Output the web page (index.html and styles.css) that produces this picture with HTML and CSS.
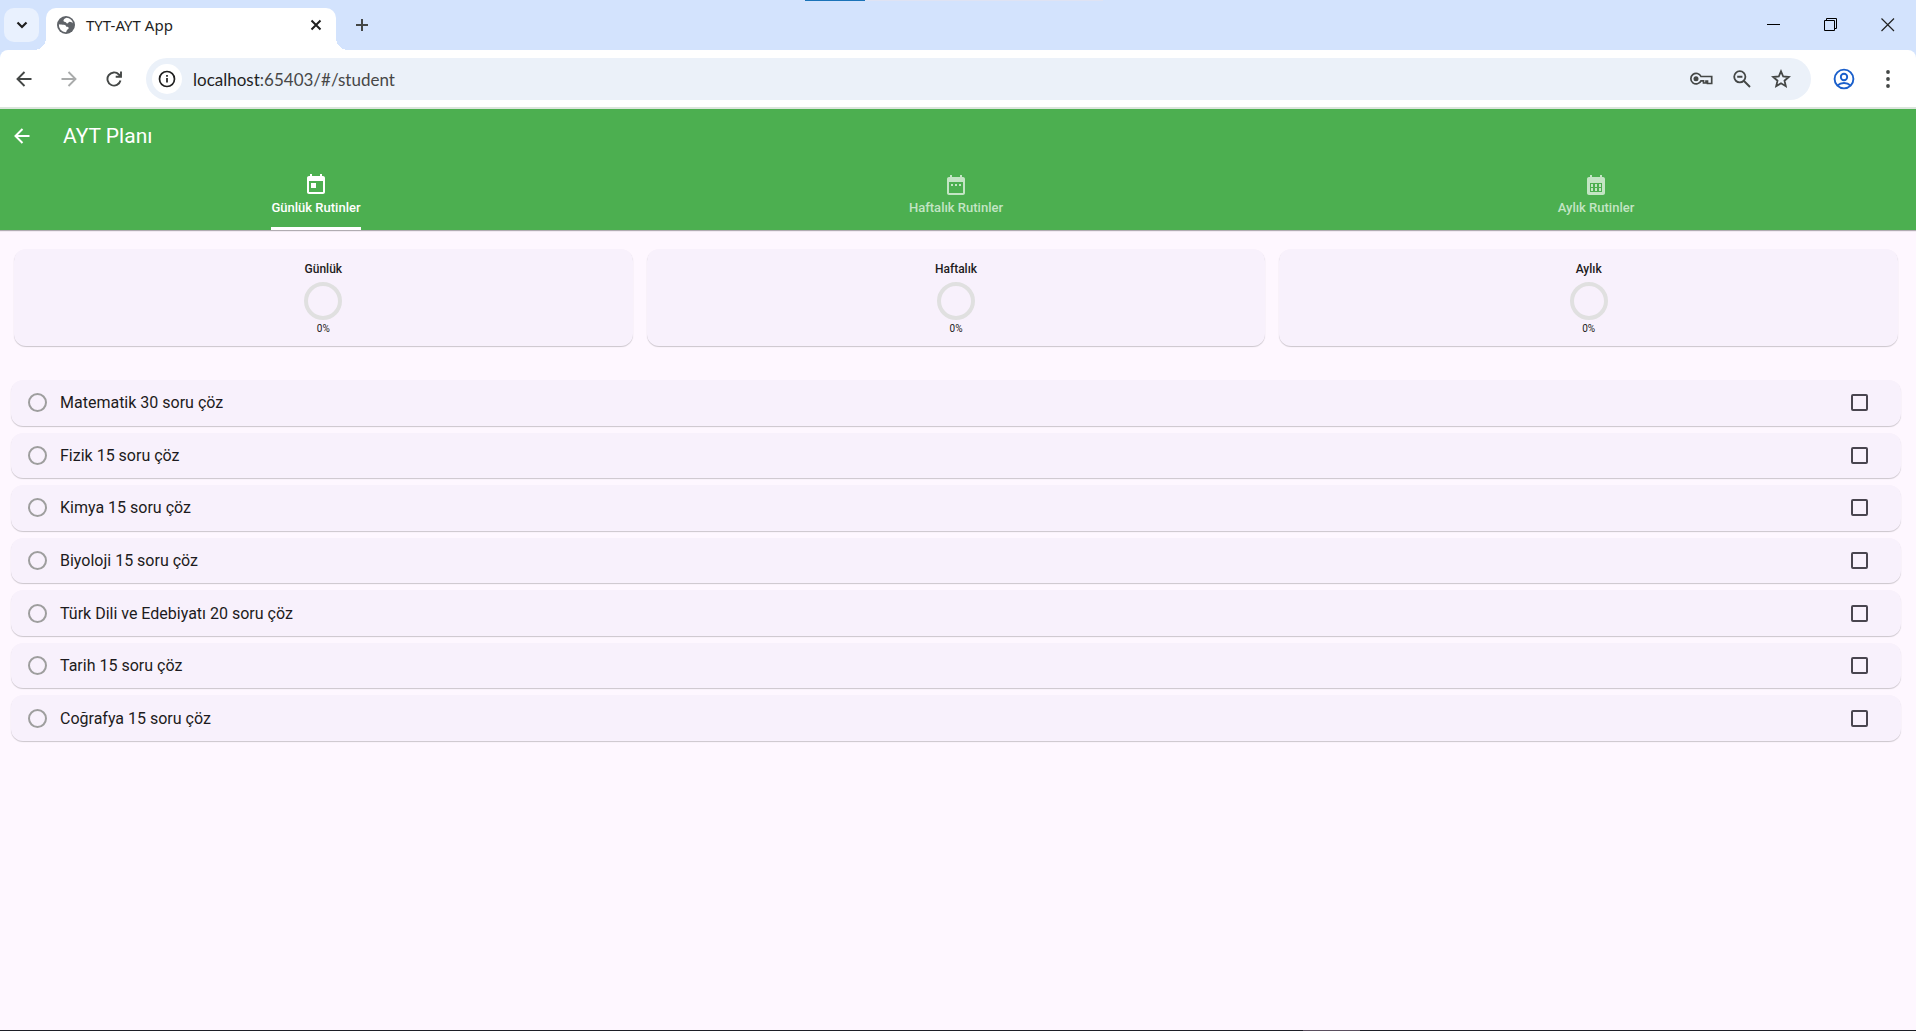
FILE: index.html
```html
<!DOCTYPE html>
<html lang="tr">
<head>
  <meta charset="UTF-8">
  <meta name="viewport" content="width=device-width, initial-scale=1.0">
  <title>TYT-AYT App</title>
  <link rel="stylesheet" href="styles.css">
</head>
<body>
  <div class="top-edge"></div>

  <!-- Browser window -->
  <header class="browser">
    <div class="tab-strip">
      <button class="tab-search" aria-label="Search tabs">
        <svg width="12" height="8" viewBox="0 0 12 8"><path d="M1.5 1.5 6 6l4.500-4.500" fill="none" stroke="#1f1f1f" stroke-width="2.200"/></svg>
      </button>
      <div class="browser-tab">
        <svg width="18" height="18" viewBox="0 0 18 18">
          <circle cx="9" cy="9" r="9" fill="#5f6368"/>
          <path d="M9.500 1.800c-1.500.6-2.700 1.300-3 2.400-.2 1 .6 1.600 1.700 1.700 1.200 0 1 1.400 2 1.500 1.300.1 1.200-1.500 2.600-1.600 1.200 0 2.600.7 3.200 1.700A7.200 7.200 0 0 0 9.500 1.800z" fill="#fff"/>
          <path d="M1.900 8.200c1.300.5 3.300.3 5 .5 1.600.2 2.300 1 2.300 2.100 1.500 0 2.500.2 2.500 1.300 0 1.200-1.500 1.300-2 2.300-.3.700-.2 1.400-1 1.800A7.200 7.200 0 0 1 1.900 8.200z" fill="#fff"/>
        </svg>
        <span class="browser-tab-title">TYT-AYT App</span>
        <button class="tab-close" aria-label="Close tab">
          <svg width="12" height="12" viewBox="0 0 12 12"><path d="M1.500 1.500l9 9M10.500 1.500l-9 9" stroke="#1f1f1f" stroke-width="2"/></svg>
        </button>
      </div>
      <button class="new-tab" aria-label="New tab">
        <svg width="14" height="14" viewBox="0 0 14 14"><path d="M7 1v12M1 7h12" stroke="#444746" stroke-width="2"/></svg>
      </button>
      <div class="window-buttons">
        <button aria-label="Minimize"><svg width="14" height="14" viewBox="0 0 14 14"><path d="M0 6.500h13" stroke="#000"/></svg></button>
        <button aria-label="Restore"><svg width="14" height="14" viewBox="0 0 14 14"><path d="M.5 2.500h10v10H.5zM2.500 2.500v-2h10v10h-2" fill="none" stroke="#000"/></svg></button>
        <button aria-label="Close"><svg width="14" height="14" viewBox="0 0 14 14"><path d="M.5.5l12.500 12.500M13 .5.5 13" stroke="#222" stroke-width="1.200"/></svg></button>
      </div>
    </div>

    <div class="toolbar">
      <nav class="nav-buttons">
        <button aria-label="Back"><svg width="16" height="16" viewBox="0 0 16 16"><path d="M15.500 8H2M8.500 1 1.500 8l7 7" fill="none" stroke="#444746" stroke-width="1.900"/></svg></button>
        <button aria-label="Forward"><svg width="16" height="16" viewBox="0 0 16 16"><path d="M.5 8H14M7.500 1l7 7-7 7" fill="none" stroke="#a9abab" stroke-width="1.900"/></svg></button>
        <button aria-label="Reload"><svg width="16" height="16" viewBox="0 0 16 16"><path d="M14.500 9.600A6.600 6.600 0 1 1 12.900 3.500L15 5.500M15 .5v5.300H9.700" fill="none" stroke="#444746" stroke-width="1.900"/></svg></button>
      </nav>
      <div class="omnibox">
        <button class="site-info" aria-label="Site information">
          <svg width="18" height="18" viewBox="0 0 18 18"><circle cx="9" cy="9" r="7.500" fill="none" stroke="#1f1f1f" stroke-width="1.700"/><path d="M9 8v4.500M9 5v1.700" stroke="#1f1f1f" stroke-width="1.700"/></svg>
        </button>
        <a class="url" href="#/student">localhost<span>:65403/#/student</span></a>
        <div class="omnibox-icons">
          <button aria-label="Passwords">
            <svg width="24" height="16" viewBox="0 0 24 16"><path d="M12 5.500h10.700v7h-4.200V10h-1.500v2H14.500V9.800H12a5.300 5.300 0 1 1 0-4.300z" fill="none" stroke="#444746" stroke-width="1.700"/><circle cx="7" cy="7.700" r="2.500" fill="#444746"/></svg>
          </button>
          <button aria-label="Zoom">
            <svg width="18" height="18" viewBox="0 0 18 18"><circle cx="6.800" cy="6.800" r="5.600" fill="none" stroke="#444746" stroke-width="1.800"/><path d="M11 11l6 6M4.200 6.800h5.200" stroke="#444746" stroke-width="1.900"/></svg>
          </button>
          <button aria-label="Bookmark">
            <svg width="20" height="20" viewBox="0 0 20 20"><path d="M10 2.300l2.200 5.200 5.600.5-4.300 3.700 1.300 5.500-4.800-2.900-4.800 2.900 1.300-5.500L2.200 8l5.600-.5z" fill="none" stroke="#444746" stroke-width="1.800"/></svg>
          </button>
        </div>
      </div>
      <div class="menu-buttons">
        <button aria-label="Profile">
          <svg width="22" height="22" viewBox="0 0 22 22"><g fill="none" stroke="#1a5fcb" stroke-width="1.900"><circle cx="11" cy="11" r="9.400"/><circle cx="11" cy="9" r="3.200"/><path d="M4.500 17.500c3.500-3.400 9.500-3.400 13 0"/></g></svg>
        </button>
        <button aria-label="Menu">
          <svg width="4" height="18" viewBox="0 0 4 18" fill="#444746"><circle cx="2" cy="2" r="1.900"/><circle cx="2" cy="9" r="1.900"/><circle cx="2" cy="16" r="1.900"/></svg>
        </button>
      </div>
    </div>
  </header>

  <!-- App -->
  <div class="app-bar">
    <div class="app-bar-row">
      <button class="app-back" aria-label="Geri">
        <svg width="16" height="16" viewBox="0 0 16 16"><path d="M15.500 8H2M8.500 1 1.500 8l7 7" fill="none" stroke="#fff" stroke-width="2"/></svg>
      </button>
      <h1>AYT Planı</h1>
    </div>
    <div class="tabs" role="tablist">
      <button class="tab active" role="tab" aria-selected="true">
        <svg width="24" height="24" viewBox="0 0 24 24" fill="currentColor"><path d="M19 3h-1V1h-2v2H8V1H6v2H5c-1.110 0-1.990.9-1.990 2L3 19c0 1.100.89 2 2 2h14c1.100 0 2-.9 2-2V5c0-1.100-.9-2-2-2zm0 16H5V8h14v11zM7 10h5v5H7z"/></svg>
        <span>Günlük Rutinler</span>
      </button>
      <button class="tab" role="tab" aria-selected="false">
        <svg width="24" height="24" viewBox="0 0 24 24" fill="currentColor"><path d="M9 11H7v2h2v-2zm4 0h-2v2h2v-2zm4 0h-2v2h2v-2zm2-7h-1V2h-2v2H8V2H6v2H5c-1.110 0-1.990.9-1.990 2L3 20c0 1.100.89 2 2 2h14c1.100 0 2-.9 2-2V6c0-1.100-.9-2-2-2zm0 16H5V9h14v11z"/></svg>
        <span>Haftalık Rutinler</span>
      </button>
      <button class="tab" role="tab" aria-selected="false">
        <svg width="24" height="24" viewBox="0 0 24 24" fill="currentColor"><path fill-rule="evenodd" d="M19 4h-1V2h-2v2H8V2H6v2H5c-1.110 0-1.990.9-1.990 2L3 20c0 1.100.89 2 2 2h14c1.100 0 2-.9 2-2V6c0-1.100-.9-2-2-2zM18 19H6v-9h12zM7 11h2v3H7zM11 11h2v3h-2zM15 11h2v3h-2zM7 15h2v3H7zM11 15h2v3h-2zM15 15h2v3h-2z"/></svg>
        <span>Aylık Rutinler</span>
      </button>
    </div>
  </div>

  <main>
    <section class="progress-cards">
      <div class="progress-card">
        <h2>Günlük</h2>
        <div class="ring"></div>
        <p>0%</p>
      </div>
      <div class="progress-card">
        <h2>Haftalık</h2>
        <div class="ring"></div>
        <p>0%</p>
      </div>
      <div class="progress-card">
        <h2>Aylık</h2>
        <div class="ring"></div>
        <p>0%</p>
      </div>
    </section>

    <ul class="routines">
      <li><label for="r1">Matematik 30 soru çöz</label><input type="checkbox" id="r1"></li>
      <li><label for="r2">Fizik 15 soru çöz</label><input type="checkbox" id="r2"></li>
      <li><label for="r3">Kimya 15 soru çöz</label><input type="checkbox" id="r3"></li>
      <li><label for="r4">Biyoloji 15 soru çöz</label><input type="checkbox" id="r4"></li>
      <li><label for="r5">Türk Dili ve Edebiyatı 20 soru çöz</label><input type="checkbox" id="r5"></li>
      <li><label for="r6">Tarih 15 soru çöz</label><input type="checkbox" id="r6"></li>
      <li><label for="r7">Coğrafya 15 soru çöz</label><input type="checkbox" id="r7"></li>
    </ul>
  </main>

  <footer class="bottom-edge"></footer>
</body>
</html>
```
FILE: styles.css
```css
*,
*::before,
*::after {
  box-sizing: border-box;
}
body {
  margin: 0;
  min-height: 100vh;
  display: flex;
  flex-direction: column;
  background-color: #fef7ff;
  color: #1d1b20;
  font-family: Roboto, sans-serif;
}
button {
  display: flex;
  align-items: center;
  justify-content: center;
  padding: 0;
  border: none;
  background: none;
  font-family: inherit;
  cursor: pointer;
}
svg {
  display: block;
  flex-shrink: 0;
}

/* Browser window */
.top-edge {
  position: absolute;
  top: 0;
  left: 42%;
  width: 298px;
  height: 1px;
  background: linear-gradient(to right, #1a73b8 60px, #dfe3f3 60px);
}
.browser {
  background-color: #d3e3fd;
}
.tab-strip {
  display: flex;
  height: 50px;
  padding: 8px 0 0 4px;
}
.tab-search {
  width: 35px;
  height: 34px;
  border-radius: 10px;
  background-color: #e9f1fe;
}
.browser-tab {
  position: relative;
  display: flex;
  align-items: center;
  width: 290px;
  height: 42px;
  margin-left: 7px;
  padding: 0 14px 8px 11px;
  border-radius: 10px 10px 0 0;
  background-color: #fff;
}
.browser-tab::before,
.browser-tab::after {
  content: "";
  position: absolute;
  bottom: 0;
  width: 12px;
  height: 12px;
}
.browser-tab::before {
  right: 100%;
  background: radial-gradient(circle at 0 0, transparent 12px, #fff 12px);
}
.browser-tab::after {
  left: 100%;
  background: radial-gradient(circle at 100% 0, transparent 12px, #fff 12px);
}
.browser-tab-title {
  flex: 1;
  margin-left: 11px;
  font-family: "Noto Sans", sans-serif;
  font-size: 15px;
  color: #1f1f1f;
}
.new-tab {
  width: 34px;
  height: 34px;
  margin-left: 9px;
}
.window-buttons {
  display: flex;
  margin-left: auto;
}
.window-buttons button {
  width: 57px;
  height: 34px;
}
.toolbar {
  display: flex;
  align-items: center;
  height: 59px;
  padding: 8px 12px 7px 7px;
  border-radius: 8px 8px 0 0;
  border-bottom: 2px solid #dbe5dc;
  background-color: #fff;
}
.nav-buttons {
  display: flex;
  gap: 11px;
}
.nav-buttons button {
  width: 34px;
  height: 34px;
}
.omnibox {
  flex: 1;
  display: flex;
  align-items: center;
  height: 42px;
  margin-left: 15px;
  padding: 0 20px 0 6px;
  border-radius: 21px;
  background-color: #ebf1f9;
}
.site-info {
  width: 30px;
  height: 30px;
  border-radius: 50%;
  background-color: #fff;
}
.url {
  margin-left: 11px;
  font-family: Lato, sans-serif;
  font-size: 17px;
  color: #1f1f1f;
  text-decoration: none;
}
.url span {
  color: #474747;
}
.omnibox-icons {
  display: flex;
  align-items: center;
  gap: 20px;
  margin-left: auto;
}
.menu-buttons {
  display: flex;
  gap: 12px;
  margin-left: 17px;
}
.menu-buttons button {
  min-width: 32px;
}

/* App bar */
.app-bar {
  background-color: #4caf50;
  color: #fff;
  box-shadow: 0 1px 1px rgba(0, 0, 0, 0.3);
}
.app-bar-row {
  display: flex;
  align-items: center;
  height: 53px;
}
.app-back {
  width: 44px;
  height: 44px;
}
h1 {
  margin: 0 0 0 19px;
  font-size: 21px;
  line-height: 24px;
  font-weight: 400;
}
.tabs {
  display: grid;
  grid-template-columns: repeat(3, 1fr);
  gap: 8px;
  padding-right: 4px;
}
.tab {
  flex-direction: column;
  height: 68px;
  color: #c3e5c4;
  font-size: 13px;
  font-weight: 500;
}
.tab span {
  height: 33px;
  padding-top: 3px;
  line-height: 16px;
}
.tab svg {
  margin-top: 11px;
}
.tab.active {
  color: #fff;
}
.tab.active span {
  border-bottom: 3px solid #fff;
  border-radius: 3px 3px 0 0;
}

/* Content */
main {
  flex: 1;
  padding-right: 4px;
}
.progress-cards {
  display: flex;
  gap: 14px;
  padding: 19px 14px 0;
}
.progress-card {
  flex: 1;
  display: flex;
  flex-direction: column;
  align-items: center;
  height: 97px;
  padding-top: 12px;
}
.progress-card,
.routines li {
  border-radius: 12px;
  background-color: #f8f1fc;
  box-shadow: 0 1px 1px rgba(0, 0, 0, 0.2);
}
.progress-card h2 {
  margin: 0;
  font-size: 12px;
  line-height: 16px;
  font-weight: 500;
}
.ring {
  width: 38px;
  height: 38px;
  margin: 5px 0 3px;
  border: 4px solid #e0e0e0;
  border-radius: 50%;
}
.progress-card p {
  margin: 0;
  font-size: 10px;
  line-height: 12px;
}
.routines {
  display: grid;
  grid-auto-rows: 1fr;
  gap: 7px;
  min-height: 361px;
  margin: 34px 11px 0;
  padding: 0;
  list-style: none;
}
.routines li {
  display: flex;
  align-items: center;
  padding: 0 33px 0 17px;
}
.routines label {
  flex: 1;
  display: flex;
  align-items: center;
  gap: 13px;
  font-size: 16px;
}
.routines label::before {
  content: "";
  width: 19px;
  height: 19px;
  border: 2px solid #9e9e9e;
  border-radius: 50%;
}
.routines input {
  appearance: none;
  width: 17px;
  height: 17px;
  margin: 0;
  border: 2px solid #49454f;
  border-radius: 2px;
}
.routines input:checked {
  background-color: #4caf50;
  border-color: #4caf50;
}
.bottom-edge {
  height: 1px;
  background: linear-gradient(to right, #1d1f26 68%, #5a4f5e 68%, #5a4f5e 71%, #1d1f26 71%);
}
```
